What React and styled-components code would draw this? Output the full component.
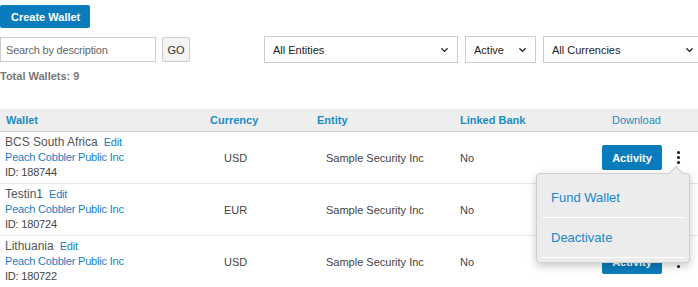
import React from "react";
import styled, { createGlobalStyle } from "styled-components";
import { FaChevronDown } from "react-icons/fa";

const GlobalStyle = createGlobalStyle`
  body {
    margin: 0;
    font-family: "Liberation Sans", Arial, sans-serif;
    font-size: 11px;
    color: #444;
    background: #fff;
    overflow: hidden;
  }
`;

const Page = styled.div`
  padding-top: 5px;
  width: 698px;
  position: relative;
`;

const CreateButton = styled.button`
  height: 23px;
  padding: 0 10px 0 11px;
  border: none;
  border-radius: 2px;
  background: #0b7cbb;
  color: #fff;
  font-family: inherit;
  font-size: 11px;
  font-weight: bold;
`;

const Filters = styled.div`
  display: flex;
  align-items: center;
  margin-top: 8px;
  white-space: nowrap;
`;

const SearchInput = styled.input`
  box-sizing: border-box;
  flex: none;
  width: 156px;
  height: 25px;
  margin: 0;
  border: 1px solid #ccc;
  padding: 0 5px;
  font-family: inherit;
  font-size: 11px;
  letter-spacing: -0.2px;
  color: #444;
  &::placeholder { color: #666; }
`;

const GoButton = styled.button`
  box-sizing: border-box;
  flex: none;
  width: 28px;
  height: 25px;
  margin: 0 0 0 6px;
  border: 1px solid #ccc;
  border-radius: 2px;
  background: #f4f4f4;
  font-family: inherit;
  font-size: 11px;
  color: #333;
  padding: 0;
`;

const SelectWrap = styled.div`
  position: relative;
  flex: none;
  width: ${(p) => p.$w}px;
  margin-left: ${(p) => p.$ml}px;
`;

const Select = styled.select`
  appearance: none;
  box-sizing: border-box;
  width: 100%;
  height: 27px;
  margin: 0;
  border: 1px solid #ccc;
  border-radius: 0;
  background: #fff;
  padding: 0 8px;
  font-family: inherit;
  font-size: 11px;
  color: #222;
`;

const Chevron = styled(FaChevronDown)`
  position: absolute;
  right: 9px;
  top: 10px;
  width: 9px;
  height: 8px;
  color: #222;
  pointer-events: none;
`;

const Total = styled.div`
  margin-top: 7px;
  font-weight: bold;
  color: #777;
`;

const Table = styled.div`
  margin-top: 27px;
  position: relative;
`;

const Grid = styled.div`
  display: grid;
  grid-template-columns: 204px 107px 143px 142px 1fr;
  align-items: center;
`;

const HeaderRow = styled(Grid)`
  height: 22px;
  background: #eeeeee;
  border-bottom: 1px solid #cfcfcf;
`;

const HeadCell = styled.div`
  padding-left: ${(p) => p.$pl || 6}px;
  font-weight: ${(p) => (p.$light ? "normal" : "bold")};
  color: #1a8dc4;
`;

const Row = styled(Grid)`
  height: 51px;
  border-bottom: 1px solid #e6e6e6;
`;

const WalletCell = styled.div`
  padding-left: 5px;
  line-height: 15px;
  letter-spacing: -0.2px;
`;

const Name = styled.span`
  font-size: 12px;
  letter-spacing: 0;
  color: #555;
  margin-right: 6px;
`;

const Link = styled.a`
  color: #1a7dc2;
  text-decoration: none;
  cursor: pointer;
`;

const Line = styled.div`
  height: 15px;
`;

const Cell = styled.div`
  padding-left: ${(p) => p.$pl}px;
  color: #444;
`;

const Actions = styled.div`
  display: flex;
  align-items: center;
  padding-left: 6px;
`;

const ActivityButton = styled.button`
  width: 60px;
  height: 25px;
  border: none;
  border-radius: 2px;
  background: #0b7cbb;
  color: #fff;
  font-family: inherit;
  font-size: 11px;
  font-weight: bold;
  padding: 0;
`;

const Kebab = styled.div`
  display: flex;
  flex-direction: column;
  gap: 2px;
  margin-left: 15px;
  span {
    width: 3px;
    height: 3px;
    border-radius: 50%;
    background: #111;
  }
`;

const Popover = styled.div`
  position: absolute;
  left: 536px;
  top: 64px;
  width: 142px;
  padding: 4px 5px;
  background: #ececec;
  border: 1px solid #cfcfcf;
  border-radius: 4px;
  box-shadow: 0 3px 8px rgba(0, 0, 0, 0.22);
  &::before {
    content: "";
    position: absolute;
    right: 8px;
    top: -6px;
    width: 9px;
    height: 9px;
    background: #ececec;
    border-left: 1px solid #cfcfcf;
    border-top: 1px solid #cfcfcf;
    transform: rotate(45deg);
  }
`;

const MenuItem = styled.div`
  height: 39px;
  line-height: 39px;
  padding-left: 9px;
  font-size: 13px;
  color: #1a86c8;
  border-bottom: 1px solid #fff;
`;

const wallets = [
  { name: "BCS South Africa", id: "188744", currency: "USD" },
  { name: "Testin1", id: "180724", currency: "EUR" },
  { name: "Lithuania", id: "180722", currency: "USD" },
];

export default function App() {
  return (
    <Page>
      <GlobalStyle />
      <CreateButton>Create Wallet</CreateButton>
      <Filters>
        <SearchInput placeholder="Search by description" />
        <GoButton>GO</GoButton>
        <SelectWrap $w={194} $ml={74}>
          <Select defaultValue="all">
            <option value="all">All Entities</option>
          </Select>
          <Chevron />
        </SelectWrap>
        <SelectWrap $w={71} $ml={7}>
          <Select defaultValue="active">
            <option value="active">Active</option>
          </Select>
          <Chevron />
        </SelectWrap>
        <SelectWrap $w={160} $ml={7}>
          <Select defaultValue="all">
            <option value="all">All Currencies</option>
          </Select>
          <Chevron />
        </SelectWrap>
      </Filters>
      <Total>Total Wallets: 9</Total>
      <Table>
        <HeaderRow>
          <HeadCell>Wallet</HeadCell>
          <HeadCell>Currency</HeadCell>
          <HeadCell>Entity</HeadCell>
          <HeadCell $pl={6}>Linked Bank</HeadCell>
          <HeadCell $pl={16} $light>Download</HeadCell>
        </HeaderRow>
        {wallets.map((w) => (
          <Row key={w.id}>
            <WalletCell>
              <Line>
                <Name>{w.name}</Name>
                <Link>Edit</Link>
              </Line>
              <Line>
                <Link>Peach Cobbler Public Inc</Link>
              </Line>
              <Line>ID: {w.id}</Line>
            </WalletCell>
            <Cell $pl={20}>{w.currency}</Cell>
            <Cell $pl={15}>Sample Security Inc</Cell>
            <Cell $pl={6}>No</Cell>
            <Actions>
              <ActivityButton>Activity</ActivityButton>
              <Kebab>
                <span />
                <span />
                <span />
              </Kebab>
            </Actions>
          </Row>
        ))}
        <Popover>
          <MenuItem>Fund Wallet</MenuItem>
          <MenuItem>Deactivate</MenuItem>
        </Popover>
      </Table>
    </Page>
  );
}
